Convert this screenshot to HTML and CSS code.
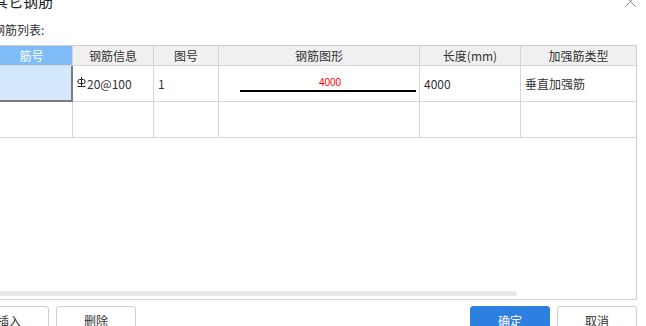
FILE: index.html
```html
<!DOCTYPE html>
<html lang="zh-CN">
<head>
  <meta charset="UTF-8">
  <title>其它钢筋</title>
  <link rel="stylesheet" href="styles.css">
</head>
<body>

  <div class="dialog">
    <div class="title-bar">
      <span class="title">其它钢筋</span>
      <svg class="close" width="11" height="11" viewBox="0 0 11 11">
        <path d="M0.5 0.5 L10.5 10.5 M10.5 0.5 L0.5 10.5" stroke="#8a8a8a" stroke-width="1" fill="none"/>
      </svg>
    </div>

    <div class="label">钢筋列表:</div>

    <div class="grid">
      <div class="row head">
        <div class="cell active-head">筋号</div>
        <div class="cell">钢筋信息</div>
        <div class="cell">图号</div>
        <div class="cell">钢筋图形</div>
        <div class="cell">长度(mm)</div>
        <div class="cell last">加强筋类型</div>
      </div>
      <div class="row">
        <div class="cell selected"></div>
        <div class="cell">
          <svg class="steel" width="9" height="10" viewBox="0 0 9 10">
            <path d="M4.5 0 V9.5 M0.5 9.5 H8.5" stroke="#222" stroke-width="1" fill="none"/>
            <rect x="1" y="2.5" width="7" height="4" rx="1.5" stroke="#222" stroke-width="1" fill="none"/>
          </svg>20@100
        </div>
        <div class="cell">1</div>
        <div class="cell">
          <div class="shape">4000</div>
        </div>
        <div class="cell">4000</div>
        <div class="cell last">垂直加强筋</div>
      </div>
      <div class="row">
        <div class="cell"></div>
        <div class="cell"></div>
        <div class="cell"></div>
        <div class="cell"></div>
        <div class="cell"></div>
        <div class="cell last"></div>
      </div>
      <div class="spacer"></div>
      <div class="scroll-thumb"></div>
    </div>

    <div class="actions">
      <div class="group left">
        <button class="btn">插入</button>
        <button class="btn">删除</button>
      </div>
      <div class="group">
        <button class="btn primary">确定</button>
        <button class="btn">取消</button>
      </div>
    </div>
  </div>

</body>
</html>
```

FILE: styles.css
```css
html, body {
  margin: 0;
  padding: 0;
  background: #fff;
  overflow: hidden;
}

body {
  font-family: "Noto Sans CJK SC", "Noto Sans", sans-serif;
  color: #333;
  font-size: 12px;
}

.dialog {
  width: 647px;
  margin-left: -10px;
}

.title-bar {
  display: flex;
  justify-content: space-between;
  align-items: center;
  height: 20px;
  margin-top: -9px;
  padding-left: 3px;
}

.title {
  font-size: 15px;
  line-height: 20px;
  color: #222;
}

.close {
  margin-right: 1px;
}

.label {
  margin-top: 11px;
  padding-left: 3px;
  line-height: 16px;
  color: #333;
}

.grid {
  margin-top: 7px;
  height: 253px;
  border: 1px solid #cfcfcf;
  display: flex;
  flex-direction: column;
}

.row {
  display: grid;
  grid-template-columns: 82px 81px 65px 201px 101px 115px;
  height: 36px;
}

.row.head {
  height: 20px;
  background: #f0f0f0;
}

.cell {
  box-sizing: border-box;
  border-right: 1px solid #d6d6d6;
  border-bottom: 1px solid #d6d6d6;
  display: flex;
  align-items: center;
  padding-left: 4px;
  white-space: nowrap;
}

.cell.last {
  border-right: none;
}

.head .cell {
  justify-content: center;
  padding-left: 0;
}

.head .active-head {
  background: #80bdf8;
  color: #fff;
}

.cell.selected {
  background: #d4e8fc;
  border-right: 2px solid #7c7c7c;
  border-bottom: 2px solid #7c7c7c;
}

.steel {
  margin-right: 1px;
  margin-top: -3px;
}

.shape {
  align-self: flex-start;
  margin: 10px 3px 0 17px;
  width: 180px;
  box-sizing: border-box;
  padding-left: 4px;
  border-bottom: 2px solid #000;
  text-align: center;
  font-family: "Liberation Sans", sans-serif;
  font-size: 10px;
  line-height: 14px;
  color: #f00;
}

.spacer {
  flex: 1;
}

.scroll-thumb {
  width: 526px;
  height: 5px;
  margin-bottom: 3px;
  border-radius: 3px;
  background: #e8e8e8;
}

.actions {
  display: flex;
  justify-content: space-between;
  margin-top: 6px;
}

.group {
  display: flex;
  gap: 7px;
}

.group.left {
  margin-left: -21px;
}

.btn {
  width: 80px;
  height: 28px;
  border: 1px solid #cdcdcd;
  border-radius: 3px;
  background: #fff;
  color: #333;
  font-family: "Noto Sans CJK SC", sans-serif;
  font-size: 12px;
  padding: 0;
}

.btn.primary {
  background: #2d7fe0;
  border-color: #2d7fe0;
  color: #fff;
}
```
